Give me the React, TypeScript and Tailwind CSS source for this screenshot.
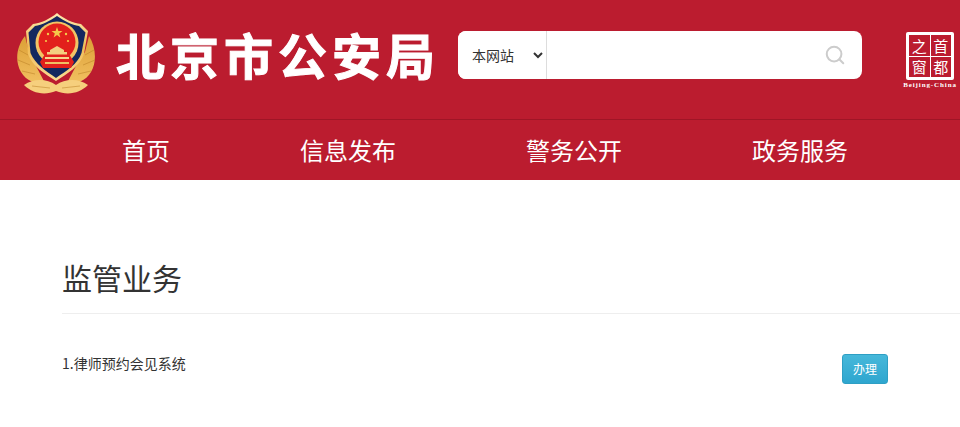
import { Search } from "lucide-react";

const cjk = '"Noto Sans CJK SC", "Noto Sans", sans-serif';

function Emblem() {
  return (
    <svg viewBox="16 12 80 84" className="w-[80px] h-[84px] shrink-0">
      <defs>
        <linearGradient id="gold" x1="0" y1="0" x2="0" y2="1">
          <stop offset="0" stopColor="#fdeab0" />
          <stop offset="0.5" stopColor="#f0bb55" />
          <stop offset="1" stopColor="#f9dc94" />
        </linearGradient>
        <linearGradient id="wheat" x1="0" y1="0" x2="0" y2="1">
          <stop offset="0" stopColor="#dc9f35" />
          <stop offset="1" stopColor="#f2c162" />
        </linearGradient>
      </defs>
      {/* wheat sides */}
      <path d="M25 36 C16 47 15 62 21 72 C26 81 36 84 46 85 L36 66 L29 52 Z" fill="url(#wheat)" />
      <path d="M89 36 C96 47 97 62 91 72 C86 81 76 84 66 85 L76 66 L85 52 Z" fill="url(#wheat)" />
      <path d="M24 85 C34 78 47 79 56 85 C65 79 78 78 88 85 C80 93 68 96 56 91 C44 96 32 93 24 85 Z" fill="#f6cf7d" />
      <g stroke="#b87c22" strokeWidth="0.7" fill="none" opacity="0.7">
        <path d="M19 50 L28 55 M18 60 L30 65 M22 71 L35 74" />
        <path d="M94 50 L85 55 M95 60 L83 65 M91 71 L78 74" />
        <path d="M32 86 L50 88 M80 86 L62 88" />
      </g>
      {/* shield */}
      <path d="M57 13 C50 19 41 23 33 24 L26 31 L28 54 C32 66 45 74 56 81 C67 74 80 66 84 54 L88 31 L81 24 C73 23 64 19 57 13 Z" fill="url(#gold)" />
      <path d="M57 16 C50 21 42 25 35 26 L28.5 32.5 L30.5 53 C35 64 46 71 56 78 C66 71 78 64 81.5 53 L85.5 32.5 L79 26 C72 25 64 21 57 16 Z" fill="#14285f" />
      {/* national emblem */}
      <circle cx="57" cy="43" r="21.5" fill="#f2c465" />
      <circle cx="57" cy="42" r="18.5" fill="#e2201c" />
      <path d="M40 62 L45 54 H69 L74 62 L71 68 H43 Z" fill="#e2201c" />
      <path d="M57 27 L58.4 31 L62.5 31 L59.2 33.5 L60.4 37.5 L57 35 L53.6 37.5 L54.8 33.5 L51.5 31 L55.6 31 Z" fill="#f5c84a" />
      <circle cx="48" cy="34" r="1.2" fill="#f5c84a" />
      <circle cx="66" cy="34" r="1.2" fill="#f5c84a" />
      <circle cx="46" cy="41" r="1.1" fill="#f5c84a" />
      <circle cx="68" cy="41" r="1.1" fill="#f5c84a" />
      <path d="M50 50 L57 46 L64 50 V52 H50 Z" fill="#f3cf80" />
      <rect x="47" y="52" width="20" height="2.5" fill="#f3cf80" />
      <path d="M45 57 H69 V59 H45 Z" fill="#f6d58d" />
      <path d="M45 62 H69 V64 H45 Z" fill="#f0c063" />
    </svg>
  );
}

function CapitalLogo() {
  return (
    <div className="flex flex-col items-center w-[54px]">
      <div
        className="w-[48px] h-[48px] bg-white rounded-[2px] p-[3px] grid grid-cols-2 gap-[1px] text-white text-[15px] leading-none text-center"
        style={{ fontFamily: '"Noto Sans CJK SC", serif' }}
      >
        <span className="bg-[#bb1c2f] flex items-center justify-center">之</span>
        <span className="bg-[#bb1c2f] flex items-center justify-center">首</span>
        <span className="bg-[#bb1c2f] flex items-center justify-center">窗</span>
        <span className="bg-[#bb1c2f] flex items-center justify-center">都</span>
      </div>
      <span className="text-white text-[7px] leading-[8px] mt-[1px] font-bold tracking-[0.9px] whitespace-nowrap font-['Liberation_Serif',serif]">
        Beijing-China
      </span>
    </div>
  );
}

export default function App() {
  const nav = ["首页", "信息发布", "警务公开", "政务服务"];

  return (
    <div className="h-[427px] overflow-hidden bg-white" style={{ fontFamily: cjk }}>
      <header className="bg-[#bb1c2f]">
        <div className="h-[119px] flex items-start">
          <div className="ml-[16px] mt-[12px]">
            <Emblem />
          </div>
          <h1 className="ml-[20px] mt-[19px] text-[49px] leading-[70px] font-bold tracking-[5px] text-white whitespace-nowrap [-webkit-text-stroke:1px_white]">
            北京市公安局
          </h1>
          <div className="ml-[18px] mt-[31px] w-[404px] h-[48px] bg-white rounded-[8px] flex items-center overflow-hidden">
            <select className="w-[89px] h-full pl-[10px] pr-[3px] border-r border-[#ddd] bg-white text-[14px] text-[#333] outline-none">
              <option>本网站</option>
            </select>
            <input className="flex-1 min-w-0 h-full outline-none" />
            <Search className="w-[22px] h-[22px] mr-[16px] text-[#ccc]" strokeWidth={2.2} />
          </div>
          <div className="ml-[41px] mt-[32px]">
            <CapitalLogo />
          </div>
        </div>
        <nav className="h-[61px] border-t border-[#9f1526] flex items-center pl-[122px] gap-[130px] text-[24px] text-white">
          {nav.map((item) => (
            <a key={item} className="whitespace-nowrap">
              {item}
            </a>
          ))}
        </nav>
      </header>

      <main className="pl-[62px]">
        <h2 className="mt-[72px] pb-[11px] text-[30px] leading-[50px] text-[#333] border-b border-[#eee]">
          监管业务
        </h2>
        <div className="mt-[40px] flex items-start">
          <span className="w-[780px] -mt-[1px] text-[14px] leading-[20px] text-[#333]">1.律师预约会见系统</span>
          <button className="w-[46px] h-[30px] rounded-[3px] border border-[#2e9fc4] bg-gradient-to-b from-[#46b8da] to-[#2ea6cf] text-white text-[12px]">
            办理
          </button>
        </div>
      </main>
    </div>
  );
}
